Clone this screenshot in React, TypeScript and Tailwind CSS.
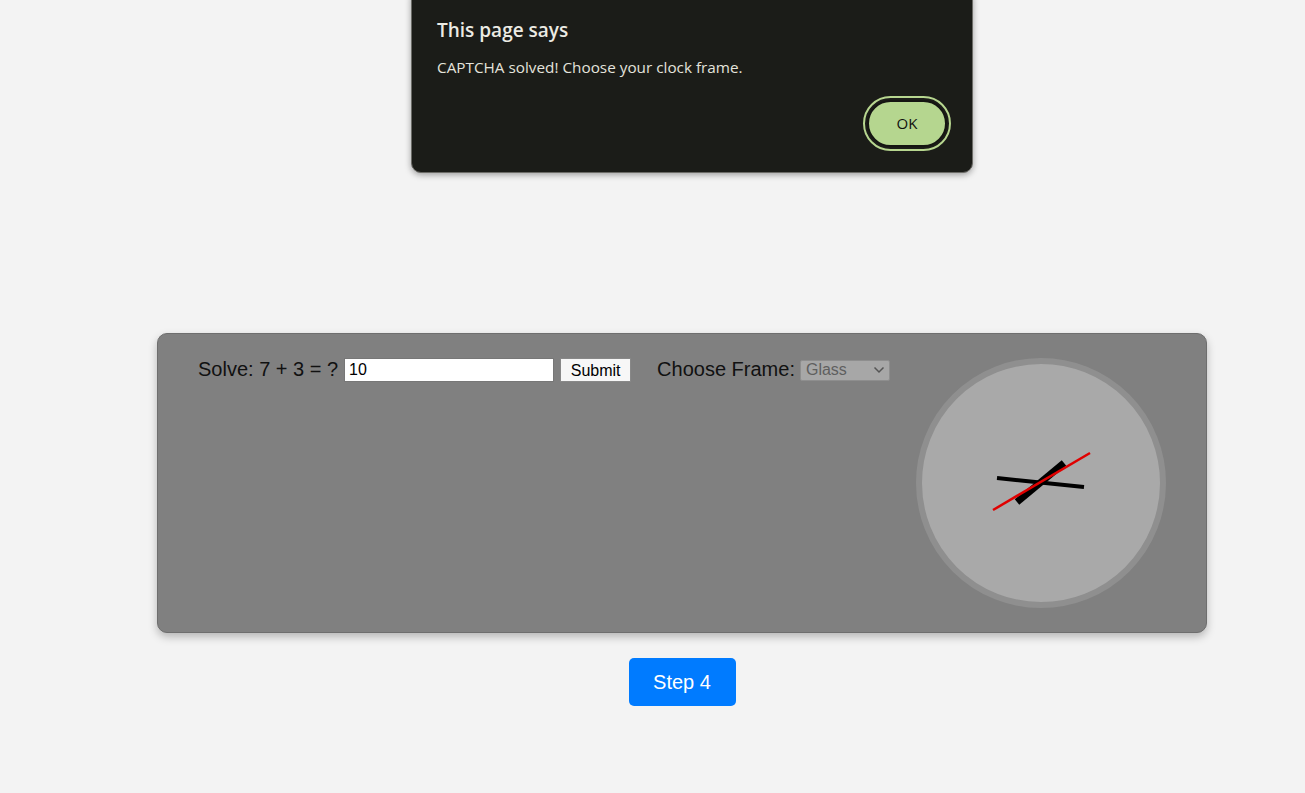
import React from "react";

export default function App() {
  return (
    <div className="relative min-h-[793px] w-full overflow-hidden bg-[#f3f3f3]" style={{ fontFamily: "Arial, 'Liberation Sans', sans-serif" }}>
      <div className="ml-[157px] w-[1050px] pt-[333px]">
        <div className="flex h-[300px] items-start justify-between rounded-[10px] border border-[#6e6e6e] bg-[#808080] pl-[40px] pr-[40px] pt-[23px] shadow-[0_4px_8px_rgba(0,0,0,0.25)]">
          <div className="mt-[1px] flex h-[24px] items-center text-[20px] text-[#111] font-['Liberation_Sans',Arial,sans-serif]">
            <span className="-mt-[2px]">Solve: 7 + 3 = ?</span>
            <input
              readOnly
              value="10"
              className="ml-[6px] h-[24px] w-[210px] border border-[#777] bg-white px-[4px] text-[16px] text-black outline-none"
            />
            <button className="ml-[6px] h-[24px] w-[71px] border border-[#888] bg-[#f7f7f7] text-[16px] text-black">Submit</button>
            <span className="-mt-[2px] ml-[26px]">Choose Frame:</span>
            <div className="ml-[5px] flex h-[21px] w-[90px] items-center justify-between rounded-[2px] border border-[#8e8e8e] bg-[#a7a7a7] pl-[5px] pr-[4px] text-[16px] text-[#5f5f5f]">
              <span>Glass</span>
              <svg width="12" height="8" viewBox="0 0 12 8" fill="none">
                <path d="M1.5 1.5 L6 6 L10.5 1.5" stroke="#555" strokeWidth="1.5" />
              </svg>
            </div>
          </div>
          <div className="mt-[1px] h-[250px] w-[250px] shrink-0 rounded-full border-[6px] border-[#8f8f8f] bg-[#a9a9a9]">
            <svg width="238" height="238" viewBox="6 6 238 238">
              <line x1="81" y1="120" x2="168" y2="129" stroke="#000" strokeWidth="4" />
              <line x1="101" y1="144" x2="148" y2="105" stroke="#000" strokeWidth="7" />
              <line x1="77" y1="152" x2="174" y2="95" stroke="#e00000" strokeWidth="2.5" />
            </svg>
          </div>
        </div>
        <div className="mt-[25px] flex justify-center">
          <button className="h-[48px] w-[107px] rounded-[5px] bg-[#007bff] text-[20px] text-white">Step 4</button>
        </div>
      </div>

      <div
        className="absolute left-[411px] top-[-12px] h-[185px] w-[562px] rounded-[10px] border border-[#6b6b66] bg-[#1b1c18] shadow-[0_2px_6px_rgba(0,0,0,0.35)]"
        style={{ fontFamily: "'Open Sans', 'Noto Sans', sans-serif" }}
      >
        <div className="pl-[25px] pt-[29px] text-[19px] font-semibold leading-[24px] text-[#ecebe3]">This page says</div>
        <div className="pl-[25px] pt-[15px] text-[15.3px] leading-[20px] text-[#e4e3dc]">CAPTCHA solved! Choose your clock frame.</div>
        <div className="absolute right-[21px] top-[107px] rounded-full border-2 border-[#b7d68f] p-[2px]">
          <div className="flex h-[47px] w-[80px] items-center justify-center rounded-full border-2 border-[#151612] bg-[#b5d68f] text-[15px] text-[#11120e]">
            OK
          </div>
        </div>
      </div>
    </div>
  );
}
